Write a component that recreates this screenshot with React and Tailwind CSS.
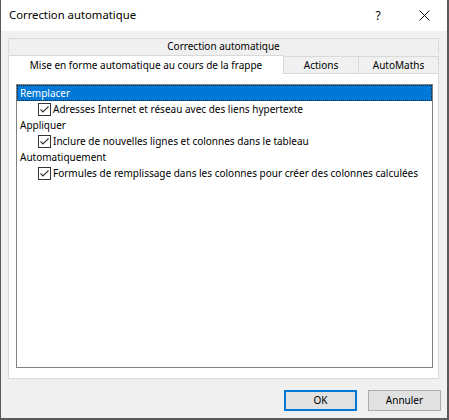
import React from 'react';

const font = { fontFamily: '"Noto Sans", "Liberation Sans", sans-serif' };

const CheckBox = () => (
  <span className="w-[13px] h-[13px] border border-[#333333] bg-white flex items-center justify-center shrink-0">
    <svg width="11" height="11" viewBox="0 0 11 11" fill="none">
      <path d="M1.5 5.5 L4 8 L9.5 2.5" stroke="#333333" strokeWidth="1.1" />
    </svg>
  </span>
);

const Category = ({ label, selected }) => (
  <div
    className={`h-[16px] flex items-center pl-[3px] whitespace-nowrap ${
      selected ? 'bg-[#0078d7] text-white outline-1 outline-dotted outline-[#222] -outline-offset-1' : 'text-black'
    }`}
  >
    {label}
  </div>
);

const Option = ({ label }) => (
  <div className="h-[16px] flex items-center pl-[21px] gap-[2px] whitespace-nowrap">
    <CheckBox />
    <span>{label}</span>
  </div>
);

export default function App() {
  return (
    <div
      className="w-[449px] h-[420px] flex flex-col bg-[#f0f0f0] border-l border-r-2 border-b-2 border-[#5a5a5a] text-[10px] text-black select-none"
      style={font}
    >
      {/* title bar */}
      <div className="h-[31px] bg-white flex items-center shrink-0">
        <span className="pl-[8px] text-[11.3px] flex-1">Correction automatique</span>
        <span className="w-[46px] text-center text-[12px]">?</span>
        <span className="w-[46px] flex justify-center">
          <svg width="11" height="11" viewBox="0 0 11 11">
            <path d="M0.5 0.5 L10.5 10.5 M10.5 0.5 L0.5 10.5" stroke="#111" strokeWidth="1" />
          </svg>
        </span>
      </div>

      <div className="flex-1 flex flex-col pt-[7px] pl-[7px] pr-[8px]">
        {/* tab row 1 */}
        <div className="h-[16px] border-t border-l border-r border-[#d9d9d9] flex items-center justify-center shrink-0">
          Correction automatique
        </div>
        {/* tab row 2 */}
        <div className="h-[19px] flex items-end shrink-0">
          <div className="w-[276px] h-full bg-white border-t border-l border-r border-[#d9d9d9] flex items-center justify-center -mb-px relative z-10 whitespace-nowrap">
            Mise en forme automatique au cours de la frappe
          </div>
          <div className="w-[75px] h-[17px] border-t border-r border-[#d9d9d9] flex items-center justify-center">
            Actions
          </div>
          <div className="flex-1 h-[17px] border-t border-r border-[#d9d9d9] flex items-center justify-center">
            AutoMaths
          </div>
        </div>

        {/* tab panel */}
        <div className="flex-1 bg-white border border-[#d9d9d9] pt-[10px] pl-[7px] pr-[5px] pb-[10px] flex flex-col">
          <div className="flex-1 border border-[#828282] bg-white">
            <Category label="Remplacer" selected />
            <Option label="Adresses Internet et réseau avec des liens hypertexte" />
            <Category label="Appliquer" />
            <Option label="Inclure de nouvelles lignes et colonnes dans le tableau" />
            <Category label="Automatiquement" />
            <Option label="Formules de remplissage dans les colonnes pour créer des colonnes calculées" />
          </div>
        </div>

        {/* buttons */}
        <div className="flex justify-end gap-[11px] mt-[11px] mb-[7px] mr-[-2px] shrink-0">
          <button className="w-[73px] h-[21px] bg-[#e1e1e1] border-2 border-[#0078d7] flex items-center justify-center">
            OK
          </button>
          <button className="w-[73px] h-[21px] bg-[#e1e1e1] border border-[#adadad] flex items-center justify-center">
            Annuler
          </button>
        </div>
      </div>
    </div>
  );
}
